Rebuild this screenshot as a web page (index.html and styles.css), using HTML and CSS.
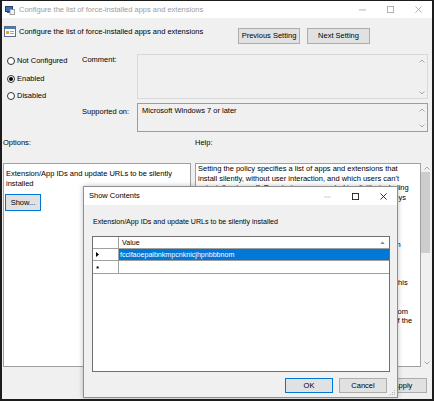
FILE: index.html
```html
<!DOCTYPE html>
<html>
<head>
<meta charset="utf-8">
<link rel="stylesheet" href="styles.css">
</head>
<body>
<div class="window">
  <div class="titlebar">
    <svg class="app-icon" viewBox="0 0 10 10"><rect x="0.5" y="1.5" width="7" height="5" fill="#3b6fb6" stroke="#23406e" stroke-width="1"/><rect x="2" y="7" width="4" height="1" fill="#666"/><rect x="5" y="4.5" width="4.5" height="5" fill="#f4f4f4" stroke="#8a8a8a" stroke-width="0.8"/></svg>
    <span class="title">Configure the list of force-installed apps and extensions</span>
    <div class="caption caption-inactive">
      <span class="cap"><svg viewBox="0 0 8 8"><path d="M0 4.5H8"/></svg></span>
      <span class="cap"><svg viewBox="0 0 8 8"><rect x="0.5" y="0.5" width="7" height="7" fill="none"/></svg></span>
      <span class="cap"><svg viewBox="0 0 8 8"><path d="M0.5 0.5L7.5 7.5M7.5 0.5L0.5 7.5"/></svg></span>
    </div>
  </div>

  <div class="header">
    <div class="header-title">
      <svg class="policy-icon" viewBox="0 0 12 11"><rect x="0.5" y="0.5" width="11" height="10" fill="#fff" stroke="#5b6f8c"/><rect x="1" y="1" width="10" height="2" fill="#4a7bbd"/><rect x="2" y="5" width="3" height="3" fill="#d8a83a"/><path d="M6 5.5h4M6 7.5h4" stroke="#9aa6b8"/></svg>
      <span>Configure the list of force-installed apps and extensions</span>
    </div>
    <div class="nav">
      <button class="btn btn-prev">Previous Setting</button>
      <button class="btn btn-next">Next Setting</button>
    </div>
  </div>

  <div class="settings">
    <div class="radios">
      <div class="radio"><span class="radio-dot"></span>Not Configured</div>
      <div class="radio checked"><span class="radio-dot"></span>Enabled</div>
      <div class="radio"><span class="radio-dot"></span>Disabled</div>
    </div>
    <div class="field-label label-comment">Comment:</div>
    <div class="box box-comment">
      <div class="box-text"></div>
      <div class="mini-scroll">
        <svg viewBox="0 0 6 4"><path d="M0.5 3.5L3 1L5.5 3.5"/></svg>
        <svg viewBox="0 0 6 4"><path d="M0.5 0.5L3 3L5.5 0.5"/></svg>
      </div>
    </div>
    <div class="field-label label-supported">Supported on:</div>
    <div class="box box-supported">
      <div class="box-text">Microsoft Windows 7 or later</div>
      <div class="mini-scroll">
        <svg viewBox="0 0 6 4"><path d="M0.5 3.5L3 1L5.5 3.5"/></svg>
        <svg viewBox="0 0 6 4"><path d="M0.5 0.5L3 3L5.5 0.5"/></svg>
      </div>
    </div>
  </div>

  <div class="pane-labels">
    <span>Options:</span>
    <span>Help:</span>
  </div>

  <div class="panes">
    <div class="options">
      <div>Extension/App IDs and update URLs to be silently installed</div>
      <button class="btn btn-show">Show...</button>
    </div>
    <div class="help">
      <p>Setting the policy specifies a list of apps and extensions that install silently, without user interaction, and which users can't uninstall or turn off. Permissions are granted implicitly, including for the enterprise.deviceAttributes and enterprise.platformKeys extension APIs. (These 2 APIs aren't available to apps and extensions that aren't force-installed.)</p>
      <p>Leaving the policy unset means no apps or extensions are autoinstalled, and users can uninstall any app or extension in Google Chrome.</p>
      <p>This policy superseeds ExtensionInstallBlocklist policy. If a previously force-installed app or extension is removed from this list, Google Chrome automatically uninstalls it.</p>
      <p>On Microsoft® Windows® instances, apps and extensions from outside the Chrome Web Store can only be forced installed if the instance is joined to a Microsoft® Active Directory® domain, running on Windows 10 Pro, or enrolled in Chrome Browser Cloud Management.</p>
    </div>
    <div class="help-scroll">
      <span class="sb-arrow"><svg viewBox="0 0 6 4"><path d="M0.5 3.5L3 1L5.5 3.5"/></svg></span>
      <span class="sb-thumb"></span>
      <span class="sb-space"></span>
      <span class="sb-arrow"><svg viewBox="0 0 6 4"><path d="M0.5 0.5L3 3L5.5 0.5"/></svg></span>
    </div>
  </div>

  <div class="footer">
    <button class="btn btn-foot btn-hidden">OK</button>
    <button class="btn btn-foot btn-hidden">Cancel</button>
    <button class="btn btn-foot">Apply</button>
  </div>

  <div class="dialog">
    <div class="dlg-titlebar">
      <span class="title">Show Contents</span>
      <div class="caption caption-active">
        <span class="cap cap-disabled"><svg viewBox="0 0 8 8"><path d="M0 4.5H8"/></svg></span>
        <span class="cap"><svg viewBox="0 0 8 8"><rect x="0.5" y="0.5" width="7" height="7" fill="none"/></svg></span>
        <span class="cap"><svg viewBox="0 0 8 8"><path d="M0.5 0.5L7.5 7.5M7.5 0.5L0.5 7.5"/></svg></span>
      </div>
    </div>
    <div class="dlg-label">Extension/App IDs and update URLs to be silently installed</div>
    <div class="dg">
      <div class="dg-corner"></div>
      <div class="dg-colhead"><span>Value</span><svg class="sort-glyph" viewBox="0 0 6 4"><path d="M0 4L3 0.5L6 4Z"/></svg></div>
      <div class="dg-rowhead"><svg class="row-pointer" viewBox="0 0 3 5"><path d="M0 0L3 2.5L0 5Z"/></svg></div>
      <div class="dg-cell selected">fcclfaoepaibnkmpcnknicjhpnbbbnom</div>
      <div class="dg-rowhead new-row">*</div>
      <div class="dg-cell"></div>
    </div>
    <div class="dlg-footer">
      <button class="btn btn-foot btn-default">OK</button>
      <button class="btn btn-foot">Cancel</button>
    </div>
    <svg class="grip" viewBox="0 0 7 7"><rect x="5" y="1" width="1" height="1"/><rect x="3" y="3" width="1" height="1"/><rect x="5" y="3" width="1" height="1"/><rect x="1" y="5" width="1" height="1"/><rect x="3" y="5" width="1" height="1"/><rect x="5" y="5" width="1" height="1"/></svg>
  </div>
</div>
</body>
</html>
```

FILE: styles.css
```css
* { box-sizing: border-box; }
html, body { margin: 0; padding: 0; }
body {
  width: 434px;
  height: 401px;
  overflow: hidden;
  background: #f0f0f0;
  font-family: "Liberation Sans", Arial, sans-serif;
  font-size: 7.5px;
  line-height: 10px;
  color: #000;
}
.window {
  position: relative;
  width: 434px;
  height: 401px;
  border: 2px solid #1c1c1c;
  border-top-width: 1px;
  background: #f0f0f0;
  display: flex;
  flex-direction: column;
  overflow: hidden;
}

/* title bar */
.titlebar {
  flex: 0 0 17px;
  display: flex;
  align-items: center;
  background: #fff;
  padding-left: 3px;
  color: #9d9d9d;
}
.app-icon { width: 10px; height: 10px; margin-right: 4px; flex: none; }
.caption { margin-left: auto; display: flex; align-self: stretch; }
.cap { width: 28px; display: flex; align-items: center; justify-content: center; }
.cap svg { width: 7px; height: 7px; fill: none; stroke-width: 1; }
.caption-inactive .cap svg { stroke: #a8a8a8; }
.caption-active .cap svg { stroke: #1a1a1a; }
.caption-active .cap-disabled svg { stroke: #c9c9c9; }

/* header */
.header { flex: 0 0 36px; display: flex; align-items: flex-start; }
.header-title { display: flex; align-items: center; margin: 8px 0 0 2px; }
.policy-icon { width: 12px; height: 11px; margin-right: 3px; flex: none; }
.nav { display: flex; gap: 7px; margin: 10px 62px 0 auto; }

.btn {
  font: inherit;
  color: #000;
  background: #e1e1e1;
  border: 1px solid #adadad;
  padding: 0;
  margin: 0;
  height: 16px;
  line-height: 14px;
  text-align: center;
  border-radius: 0;
}
.btn-prev { width: 62px; }
.btn-next { width: 63px; }

/* settings */
.settings {
  flex: 0 0 78px;
  display: grid;
  grid-template-columns: 80px 55px 291px;
  grid-template-rows: 45px 29px;
  row-gap: 4px;
}
.radios {
  grid-row: 1 / 3;
  grid-column: 1;
  display: flex;
  flex-direction: column;
  gap: 7.5px;
  padding: 2px 0 0 5px;
}
.radio { display: flex; align-items: center; gap: 2px; height: 10px; }
.radio-dot {
  width: 8px;
  height: 8px;
  border: 1px solid #333;
  border-radius: 50%;
  background: #fff;
  display: flex;
  align-items: center;
  justify-content: center;
  flex: none;
}
.radio.checked .radio-dot::after {
  content: "";
  width: 4px;
  height: 4px;
  border-radius: 50%;
  background: #000;
}
.field-label { grid-column: 2; }
.label-comment { grid-row: 1; padding-top: 1px; }
.label-supported { grid-row: 2; padding-top: 4px; }
.box { grid-column: 3; display: flex; border: 1px solid #d9d9d9; background: #f0f0f0; }
.box-comment { grid-row: 1; }
.box-supported { grid-row: 2; border-color: #9d9d9d; }
.box-text { flex: 1; padding: 2px 4px; }
.mini-scroll {
  width: 11px;
  display: flex;
  flex-direction: column;
  justify-content: space-between;
  align-items: center;
  padding: 4px 0 3px;
}
.mini-scroll svg, .sb-arrow svg { width: 6px; height: 4px; fill: none; stroke: #a6a6a6; stroke-width: 1; }

/* panes */
.pane-labels {
  flex: 0 0 10px;
  display: grid;
  grid-template-columns: 188px 241px;
  column-gap: 4px;
  margin: 6px 0 15px 1px;
}
.panes { flex: 0 0 204px; display: flex; margin-left: 1px; }
.options {
  width: 188px;
  background: #fff;
  border: 1px solid #a0a0a0;
  padding: 5px 2px 0;
  line-height: 9.5px;
}
.btn-show {
  display: block;
  width: 36px;
  height: 17px;
  line-height: 15px;
  margin: 6px 0 0 -1px;
  border-color: #0078d7;
}
.help {
  width: 226px;
  margin-left: 4px;
  background: #fff;
  border: 1px solid #a0a0a0;
  padding: 0 4px 0 2px;
  line-height: 9.5px;
  overflow: hidden;
}
.help p { margin: 0 0 9.5px; }
.help-scroll { width: 11px; display: flex; flex-direction: column; }
.sb-arrow { height: 9px; display: flex; align-items: center; justify-content: center; flex: none; }
.sb-thumb { height: 81px; width: 9px; background: #cdcdcd; flex: none; }
.sb-space { flex: 1; }

/* footer */
.footer {
  flex: 1;
  display: flex;
  justify-content: flex-end;
  align-items: flex-start;
  gap: 6px;
  padding: 11px 5px 0 0;
}
.btn-foot { width: 48px; height: 15px; line-height: 13px; }
.btn-hidden { visibility: hidden; }
.btn-default { border-color: #0078d7; }

/* dialog */
.dialog {
  position: absolute;
  left: 81px;
  top: 185px;
  width: 315px;
  height: 212px;
  border: 1px solid #8f8f8f;
  background: #f0f0f0;
  box-shadow: 0 0 5px rgba(0, 0, 0, 0.25);
  display: flex;
  flex-direction: column;
}
.dlg-titlebar {
  flex: 0 0 18px;
  display: flex;
  align-items: center;
  background: #fff;
  padding-left: 5px;
}
.dlg-label { margin: 12px 0 0 9px; font-size: 7.1px; }
.dg {
  margin: 9px 0 0 8px;
  width: 298px;
  height: 136px;
  border: 1px solid #6f6f6f;
  background: #fff;
  display: grid;
  grid-template-columns: 26px 1fr;
  grid-template-rows: 12px 12px 13px;
  align-content: start;
  flex: none;
  font-size: 7.1px;
}
.dg-corner { border-right: 1px solid #a0a0a0; border-bottom: 1px solid #a0a0a0; }
.dg-colhead {
  border-bottom: 1px solid #a0a0a0;
  display: flex;
  align-items: center;
  justify-content: space-between;
  padding: 0 4px 0 3px;
}
.sort-glyph { width: 5px; height: 3px; fill: #8a8a8a; }
.dg-rowhead {
  border-right: 1px solid #a0a0a0;
  border-bottom: 1px solid #a0a0a0;
  display: flex;
  align-items: center;
  padding-left: 3px;
}
.row-pointer { width: 3px; height: 5px; fill: #000; }
.new-row { font-size: 8px; font-weight: bold; padding-top: 3px; }
.dg-cell {
  border-bottom: 1px solid #a0a0a0;
  display: flex;
  align-items: center;
  padding-left: 1px;
}
.dg-cell.selected { background: #0078d7; color: #fff; }
.dlg-footer {
  display: flex;
  justify-content: flex-end;
  gap: 6px;
  margin-top: 6px;
  padding-right: 10px;
}
.grip { position: absolute; right: 1px; bottom: 1px; width: 7px; height: 7px; fill: #b4b4b4; }
```
